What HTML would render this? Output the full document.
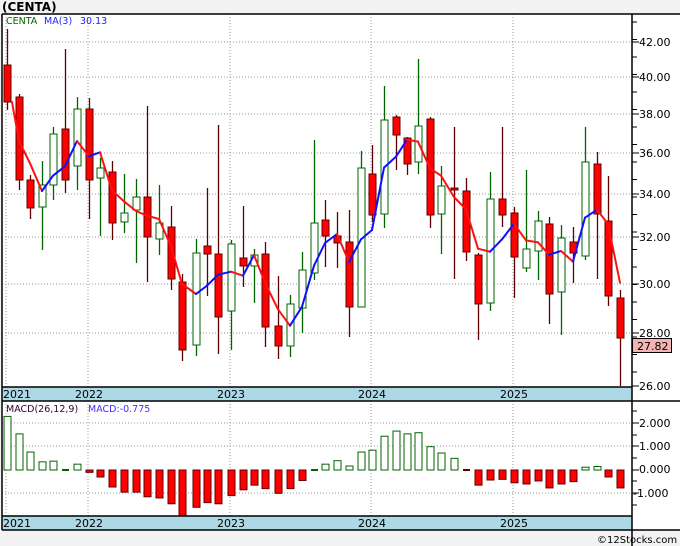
<!DOCTYPE html>
<html><head><meta charset="utf-8"><style>
body{margin:0;background:#f2f2f2;width:680px;height:546px;overflow:hidden;font-family:"DejaVu Sans","Liberation Sans",sans-serif}
svg{position:absolute;left:0;top:0}
</style></head><body>
<svg id="s" width="680" height="546" xmlns="http://www.w3.org/2000/svg" font-family="DejaVu Sans, Liberation Sans, sans-serif">
<rect x="0" y="0" width="680" height="546" fill="#f2f2f2"/>
<rect x="2" y="14" width="678" height="516" fill="#fff"/>
<text x="2" y="11" font-size="12" font-weight="bold" fill="#000">(CENTA)</text>
<g id="grid" stroke="#999" stroke-dasharray="1,2" stroke-width="1"></g>
<rect x="2" y="387" width="630" height="14" fill="#add8e6"/>
<rect x="2" y="516" width="630" height="14" fill="#add8e6"/>
<g id="c"></g>
<g stroke="#000" stroke-width="1.5" fill="none">
<line x1="2" y1="14" x2="680" y2="14"/>
<line x1="2" y1="14" x2="2" y2="530"/>
<line x1="632" y1="14" x2="632" y2="546"/>
<line x1="2" y1="387" x2="632" y2="387"/>
<line x1="2" y1="401" x2="680" y2="401"/>
<line x1="2" y1="516" x2="632" y2="516"/>
<line x1="2" y1="530" x2="680" y2="530"/>
</g>
<g id="ticks" stroke="#000" stroke-width="1"></g>
<g font-size="11" fill="#000">
<text x="3" y="398">2021</text><text x="75" y="398">2022</text><text x="217" y="398">2023</text><text x="358" y="398">2024</text><text x="500" y="398">2025</text>
<text x="3" y="527">2021</text><text x="75" y="527">2022</text><text x="217" y="527">2023</text><text x="358" y="527">2024</text><text x="500" y="527">2025</text>
</g>
<g font-size="11" fill="#000">
<text x="639" y="46">42.00</text><text x="639" y="81">40.00</text><text x="639" y="118">38.00</text><text x="639" y="157">36.00</text><text x="639" y="198">34.00</text><text x="639" y="241">32.00</text><text x="639" y="288">30.00</text><text x="639" y="337">28.00</text><text x="639" y="390">26.00</text>
<text x="639" y="427">2.000</text><text x="639" y="450">1.000</text><text x="639" y="473">0.000</text><text x="633" y="497">-1.000</text>
</g>
<rect x="632.5" y="338.5" width="39" height="14" fill="#f4b4b4" stroke="#000"/>
<text x="637" y="350" font-size="11" fill="#000">27.82</text>
<text x="6" y="24" font-size="9.5" fill="#006400">CENTA</text>
<text x="44" y="24" font-size="9.5" fill="#2020ff">MA(3)</text>
<text x="80" y="24" font-size="9.5" fill="#2020ff">30.13</text>
<text x="6" y="412" font-size="9.5" fill="#330033">MACD(26,12,9)</text>
<text x="88" y="412" font-size="9.5" fill="#4b2aff">MACD:-0.775</text>
<text x="597" y="543" font-size="10" fill="#000">©12Stocks.com</text>
</svg>
<script>
var NS="http://www.w3.org/2000/svg";
function el(p,t,a){var e=document.createElementNS(NS,t);for(var k in a)e.setAttribute(k,a[k]);document.getElementById(p).appendChild(e);return e;}
var yrs=[6,88,230,371,513];
yrs.forEach(function(x){el("grid","line",{x1:x,y1:14,x2:x,y2:387});el("grid","line",{x1:x,y1:401,x2:x,y2:516});});
[42,77,114,153,194,237,284,333].forEach(function(y){el("grid","line",{x1:2,y1:y,x2:632,y2:y});});
[423,446,493].forEach(function(y){el("grid","line",{x1:2,y1:y,x2:632,y2:y});});
// ticks
for(var y=22;y<387;y+=17.5){el("ticks","line",{x1:632,y1:y,x2:637,y2:y});}
[42,77,114,153,194,237,284,333,386,423,446,470,493].forEach(function(y){el("ticks","line",{x1:632,y1:y,x2:639,y2:y});});
[411,435,458,481,505].forEach(function(y){el("ticks","line",{x1:632,y1:y,x2:637,y2:y});});
// candles: [x, bodyTop, bodyBot, wickTop, wickBot, up]
var C=[[7,65,102,29,110,0],[19,97,180,94,190,0],[30,180,208,175,219,0],[42,185,207,161,250,1],[53,134,185,127,200,1],[65,129,180,49,193,0],[77,109,166,97,190,1],[89,109,180,98,219,0],[100,168,178,158,236,1],[112,172,223,161,240,0],[124,213,222,174,233,1],[136,197,210,179,263,1],[147,197,237,106,282,0],[159,223,239,185,255,1],[171,227,279,206,290,0],[182,282,350,274,361,0],[196,253,345,239,356,1],[207,246,254,188,296,0],[218,254,317,125,354,0],[231,244,311,240,350,1],[243,258,266,206,287,0],[254,255,266,249,303,1],[265,254,327,242,347,0],[278,326,346,276,359,0],[290,304,346,295,357,1],[302,270,308,252,333,1],[314,223,273,140,280,1],[325,220,236,200,267,0],[337,236,243,212,268,0],[349,242,307,210,337,0],[361,168,307,151,307,1],[372,174,215,145,222,0],[384,120,214,86,228,1],[396,117,135,115,170,0],[407,138,164,137,175,0],[418,126,162,59,174,1],[430,119,215,117,228,0],[441,186,214,166,254,1],[454,188,190,127,279,0],[466,191,252,178,261,0],[478,255,304,253,340,0],[490,199,303,172,311,1],[502,199,215,127,227,0],[514,213,257,207,298,0],[526,249,268,170,272,1],[538,221,251,211,280,1],[549,224,294,217,324,0],[561,238,292,225,335,1],[573,242,253,227,283,0],[585,162,256,127,260,1],[597,164,214,152,279,0],[608,221,296,176,306,0],[620,298,338,290,386,0]];
C.forEach(function(c){
 var col=c[5]?"#006400":"#600000";
 el("c","line",{x1:c[0]+.5,y1:c[3],x2:c[0]+.5,y2:c[4],stroke:col,"stroke-width":1.3});
 var h=Math.max(c[2]-c[1],2);
 if(c[5])el("c","rect",{x:c[0]-3,y:c[1],width:7,height:h,fill:"#fff",stroke:"#006400","stroke-width":1});
 else el("c","rect",{x:c[0]-3,y:c[1],width:7,height:h,fill:"#ff0000",stroke:"#600000","stroke-width":1});
});
// MA
function cl(c){return c[5]?c[1]:c[2];}
var pts=[];
for(var i=2;i<C.length;i++){pts.push([C[i][0],(cl(C[i])+cl(C[i-1])+cl(C[i-2]))/3]);}
pts.unshift([C[1][0],(cl(C[0])+cl(C[1]))/2]);pts.unshift([C[0][0]+5,cl(C[0])]);
for(var i=1;i<pts.length;i++){var up=pts[i][1]<pts[i-1][1];
 el("c","line",{x1:pts[i-1][0],y1:pts[i-1][1],x2:pts[i][0],y2:pts[i][1],stroke:up?"#1010ff":"#ff1010","stroke-width":2,"stroke-linecap":"round"});}
// MACD
var M=[2.3,1.55,0.77,0.35,0.38,0.05,0.25,-0.1,-0.3,-0.73,-0.95,-0.95,-1.15,-1.2,-1.45,-1.95,-1.6,-1.4,-1.45,-1.1,-0.85,-0.65,-0.8,-1.0,-0.8,-0.45,0.05,0.25,0.4,0.17,0.77,0.85,1.45,1.67,1.55,1.6,1.0,0.73,0.5,-0.05,-0.65,-0.43,-0.4,-0.55,-0.6,-0.47,-0.77,-0.6,-0.5,0.12,0.15,-0.3,-0.77];
M.forEach(function(v,i){var x=C[i][0];var h=Math.abs(v)*23.3;var y0=470;
 if(Math.abs(v)<0.08){el("c","rect",{x:x-3,y:y0-1,width:7,height:2,fill:v>0?"#006400":"#600000"});return;}
 if(v>0)el("c","rect",{x:x-3,y:y0-h,width:7,height:h,fill:"#fff",stroke:"#006400","stroke-width":1});
 else el("c","rect",{x:x-3,y:y0,width:7,height:h,fill:"#ff0000",stroke:"#600000","stroke-width":1});
});
</script>
</body></html>
